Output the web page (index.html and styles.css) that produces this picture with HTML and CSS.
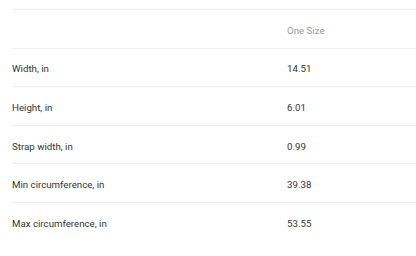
FILE: index.html
```html
<!DOCTYPE html>
<html lang="en">
<head>
    <meta charset="UTF-8">
    <title>Size chart</title>
    <link rel="stylesheet" href="styles.css">
</head>
<body>
    <div class="size-table">
        <div class="size-row head">
            <div class="size-label"></div>
            <div class="size-value">One Size</div>
        </div>
        <div class="size-row">
            <div class="size-label">Width, in</div>
            <div class="size-value">14.51</div>
        </div>
        <div class="size-row">
            <div class="size-label">Height, in</div>
            <div class="size-value">6.01</div>
        </div>
        <div class="size-row">
            <div class="size-label">Strap width, in</div>
            <div class="size-value">0.99</div>
        </div>
        <div class="size-row">
            <div class="size-label">Min circumference, in</div>
            <div class="size-value">39.38</div>
        </div>
        <div class="size-row">
            <div class="size-label">Max circumference, in</div>
            <div class="size-value">53.55</div>
        </div>
    </div>
</body>
</html>
```

FILE: styles.css
```css
body {
    margin: 0;
    background-color: #fff;
    font-family: Roboto, 'Liberation Sans', sans-serif;
    font-size: 9.7px;
    color: #333;
}

.size-table {
    margin-left: 12px;
    padding-top: 9px;
}

.size-row {
    display: flex;
    align-items: center;
    box-sizing: border-box;
    height: 38.6px;
    padding-top: 3px;
    border-top: 1px solid #f0f0f0;
}

.size-label {
    width: 275px;
    flex-shrink: 0;
}

.size-row.head .size-value {
    color: #9a9a9a;
}
```
